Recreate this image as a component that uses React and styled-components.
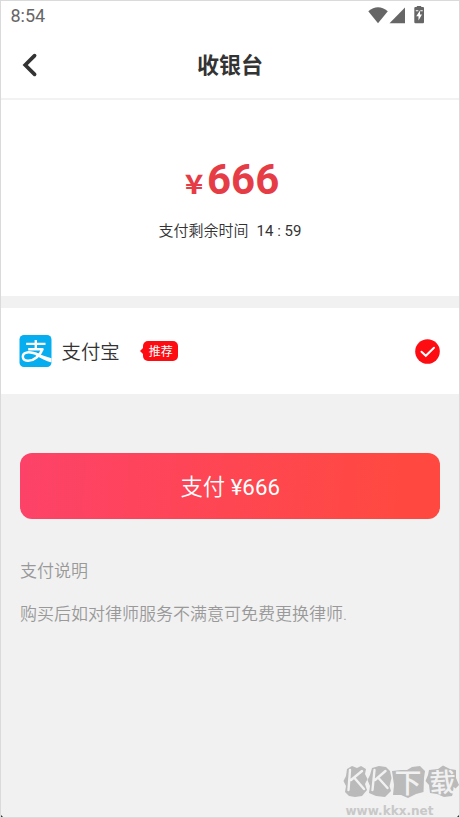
import React from "react";
import styled, { createGlobalStyle } from "styled-components";

const GlobalStyle = createGlobalStyle`
  * { box-sizing: border-box; }
  body { margin: 0; background: #f1f1f1; }
`;

const Screen = styled.main`
  position: relative;
  display: flex;
  flex-direction: column;
  width: 460px;
  height: 818px;
  overflow: hidden;
  border: 1px solid #dadada;
  background: #f1f1f1;
  color: #333;
  font-family: Roboto, "Noto Sans CJK SC", sans-serif;
`;

const StatusBar = styled.div`
  display: flex;
  justify-content: space-between;
  height: 30px;
  padding: 0 33px 0 9.5px;
  background: #fff;
  color: #666;
`;

const Clock = styled.span`
  font-size: 18px;
  line-height: 30px;
`;

const Header = styled.header`
  display: grid;
  grid-template-columns: 60px 1fr 60px;
  align-items: center;
  height: 69px;
  border-bottom: 2px solid #f2f2f2;
  background: #fff;
`;

const BackButton = styled.button`
  display: flex;
  padding: 0 0 0 20px;
  border: 0;
  background: none;
`;

const Title = styled.h1`
  margin: 2px 0 0;
  font-size: 22px;
  line-height: 30px;
  font-weight: 700;
  text-align: center;
`;

const Summary = styled.section`
  display: flex;
  flex-direction: column;
  align-items: center;
  height: 196px;
  padding-top: 53px;
  background: #fff;
`;

const Amount = styled.div`
  display: flex;
  align-items: baseline;
  gap: 5px;
  height: 54px;
  padding-left: 5px;
  color: #e63c46;
  font-size: 42px;
  line-height: 54px;
  font-weight: 700;
`;

const Currency = styled.span`
  font-family: "Noto Sans CJK SC", sans-serif;
  font-size: 27.5px;
  font-weight: 600;
  transform: scaleX(1.15);
`;

const Countdown = styled.div`
  display: flex;
  gap: 8px;
  margin-top: 12px;
  font-size: 15px;
  line-height: 24px;
  white-space: pre;
`;

const CountdownLabel = styled.span`
  font-weight: 350;
`;

const Timer = styled.span`
  letter-spacing: 0;
`;

const Method = styled.section`
  display: flex;
  align-items: center;
  height: 86px;
  margin-top: 12px;
  padding: 0 19px 0 18px;
  background: #fff;
`;

const MethodName = styled.span`
  margin: 3px 0 0 9.5px;
  font-size: 19.4px;
  line-height: 28px;
  font-weight: 350;
`;

const Tag = styled.span`
  position: relative;
  width: 35px;
  height: 20px;
  margin-left: 23.5px;
  border-radius: 5px;
  background: #fd0d12;
  color: #fff;
  font-size: 12px;
  line-height: 22px;
  text-align: center;
  &::before {
    content: "";
    position: absolute;
    top: 6px;
    left: -3px;
    border: 4px solid transparent;
    border-right-color: #fd0d12;
    border-left: 0;
  }
`;

const Spacer = styled.span`
  flex: 1;
`;

const PayButton = styled.button`
  height: 66px;
  margin: 59px 19px 0 18.5px;
  padding: 1px 0 0 1px;
  border: 0;
  border-radius: 12px;
  background: linear-gradient(95deg, #fd4269, #ff4940 90%);
  color: #fff;
  font: 22.3px/64px Roboto, "Noto Sans CJK SC", sans-serif;
`;

const PayLabel = styled.span`
  font-weight: 350;
`;

const Notes = styled.section`
  display: flex;
  flex-direction: column;
  gap: 18px;
  margin-top: 40px;
  padding-left: 19px;
  color: #999;
  font-size: 17px;
  line-height: 25px;
  font-weight: 350;
`;

const Note = styled.p`
  margin: 0;
`;

const Watermark = styled.div`
  position: absolute;
  right: -1px;
  bottom: -1px;
  svg { display: block; }
`;

const CornerMark = styled.i`
  position: absolute;
  bottom: 0;
  left: ${(p) => (p.$side === "left" ? "0" : "auto")};
  right: ${(p) => (p.$side === "right" ? "0" : "auto")};
  border-bottom: 2px solid #333;
  border-left: ${(p) => (p.$side === "left" ? "0" : "2px solid transparent")};
  border-right: ${(p) => (p.$side === "right" ? "0" : "2px solid transparent")};
`;

function StatusIcons() {
  return (
    <svg width="58" height="30" viewBox="368 1 58 30" fill="#666">
      <path d="M368.3 11.2Q378 3.4 387.8 11.2L378 23.3Z" />
      <path d="M389.5 23.2L405 7.6V23.2Z" />
      <path d="M416.8 7V6H421.2V7H423Q424 7 424 8V22Q424 23.2 423 23.2H415.4Q414.3 23.2 414.3 22V8Q414.3 7 415.4 7Z" />
      <path d="M415.8 10.3h2.5v.9h-2.5zM420.3 10.3h2.4v.9h-2.4z" fill="#fff" />
      <path d="M420 10.5L416.2 16.3H418.5V20.4L422 14.6H420Z" fill="#fff" />
    </svg>
  );
}

function AlipayIcon() {
  return (
    <svg width="33" height="32" viewBox="0 0 33 32" fill="none">
      <rect x=".5" width="32" height="32" rx="4.5" fill="#06adef" />
      <g stroke="#fff">
        <path d="M16.8 5V14.5M7.2 8.9H26.5M9.2 14.2H24.4" strokeWidth="2.4" />
        <path d="M23.4 13.6C21.5 20.5 14.5 26.2 8.6 25.8C2.4 25.3 2.2 18.2 8.2 17.4C13 16.8 17 18.8 21 20.6" strokeWidth="2.5" />
      </g>
      <path d="M16.5 17.2C22.5 20 27 21.8 32.5 23.2V27.5C27 25.9 22 23.5 16.5 20.2Z" fill="#fff" />
    </svg>
  );
}

function KkxWatermark() {
  return (
    <svg width="118" height="58" viewBox="342 760 118 58">
      <g fill="#bababa">
        <path d="M347 769L352 766L357 768L361 766L366 769L365 774L367.5 779L365 784L367 790L362 796L355 797L349 796L345 792L346 786L343.5 781L346 776Z" />
        <path d="M372 768L379 766L386 767L390 771L391.5 778L389.5 786L391 791L385 797L376 796L369 793L370 786L367.5 780L370 775Z" />
        <path d="M392 771L401 770L407 770L412 767L420 766L425 771L424 778L423.5 792L416 794L408 798L401 795L393 795L394 785Z" />
        <path d="M429 770L438 769L443 765.5L450 769L456 770L456 778L459 785L454 790L452 796L444 797L437 794L430 793L429 785L425.5 781L428 775Z" />
      </g>
      <g fill="none" stroke="#f1f1f1" strokeLinecap="round" strokeLinejoin="round">
        <path d="M350 770L348.5 790M362 771L351 780M354.5 778L364 789M374.5 770L372.5 790M385.5 771L375 780M378.5 778L387.5 788" strokeWidth="2.4" />
      </g>
      <g fill="#f1f1f1" fontFamily="'Noto Sans CJK SC', sans-serif" fontWeight="500">
        <text x="394.5" y="792.5" fontSize="27">下</text>
        <text x="429.5" y="792" fontSize="26.5" transform="rotate(-3 442 782)">载</text>
      </g>
      <text x="345.5" y="815" fontFamily="'DejaVu Sans', sans-serif" fontWeight="700" fontSize="11.5" textLength="88" lengthAdjust="spacingAndGlyphs" fill="#c8c8c8">www.kkx.net</text>
    </svg>
  );
}

export default function App() {
  return (
    <>
      <GlobalStyle />
      <Screen>
        <StatusBar>
          <Clock>8:54</Clock>
          <StatusIcons />
        </StatusBar>
        <Header>
          <BackButton aria-label="返回">
            <svg width="18" height="26" viewBox="0 0 18 26" fill="none" stroke="#333" strokeWidth="3.7">
              <path d="M13.6 3.6L4.2 13L13.6 22.4" strokeLinecap="round" />
            </svg>
          </BackButton>
          <Title>收银台</Title>
        </Header>
        <Summary>
          <Amount><Currency>¥</Currency>666</Amount>
          <Countdown>
            <CountdownLabel>支付剩余时间</CountdownLabel>
            <Timer>14 : 59</Timer>
          </Countdown>
        </Summary>
        <Method>
          <AlipayIcon />
          <MethodName>支付宝</MethodName>
          <Tag>推荐</Tag>
          <Spacer />
          <svg width="25" height="25" viewBox="0 0 25 25" fill="none">
            <circle cx="12.5" cy="12.5" r="12.3" fill="#fd0d12" />
            <path d="M6.5 12.8L10.8 16.8L19 8.8" stroke="#fff" strokeWidth="2" strokeLinecap="round" />
          </svg>
        </Method>
        <PayButton><PayLabel>支付</PayLabel> ¥666</PayButton>
        <Notes>
          <Note>支付说明</Note>
          <Note>购买后如对律师服务不满意可免费更换律师.</Note>
        </Notes>
        <Watermark><KkxWatermark /></Watermark>
        <CornerMark $side="left" />
        <CornerMark $side="right" />
      </Screen>
    </>
  );
}
